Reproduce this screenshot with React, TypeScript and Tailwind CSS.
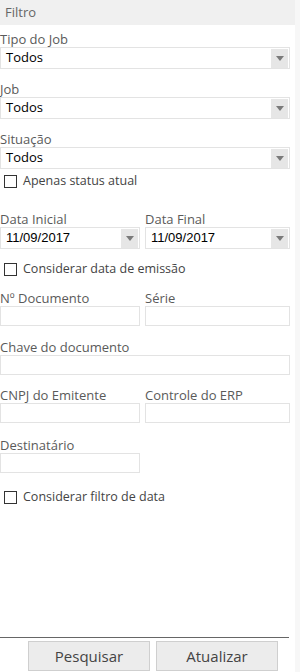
import React from "react";

const font = { fontFamily: '"Open Sans", "Noto Sans", sans-serif' };

function Arrow() {
  return (
    <div className="w-[17px] h-[19px] mr-[1px] bg-[#e6e6e6] flex items-center justify-center">
      <svg width="8" height="5" viewBox="0 0 8 5">
        <path d="M0 0 H8 L4 5 Z" fill="#7a7a7a" />
      </svg>
    </div>
  );
}

function Label({ children }: { children: React.ReactNode }) {
  return <div className="h-[16px] leading-[16px] text-[13px] text-[#5a5a5a] whitespace-nowrap">{children}</div>;
}

function Select({ value }: { value: string }) {
  return (
    <div className="h-[22px] border border-[#e3e3e3] flex items-center">
      <span className="flex-1 pl-[5px] text-[13px] text-black">{value}</span>
      <Arrow />
    </div>
  );
}

function DateInput({ value }: { value: string }) {
  return (
    <div className="h-[22px] border border-[#e3e3e3] flex items-center">
      <span
        className="flex-1 pl-[5px] text-[13px] text-black"
        style={{ fontFamily: '"Liberation Sans", Arial, sans-serif' }}
      >
        {value}
      </span>
      <Arrow />
    </div>
  );
}

function TextInput() {
  return <div className="h-[20px] border border-[#e3e3e3] bg-white" />;
}

function Check({ label }: { label: string }) {
  return (
    <div className="h-[20px] flex items-center pl-[4px]">
      <div className="w-[13px] h-[13px] border border-[#333] bg-white" />
      <span className="ml-[6px] text-[12.5px] text-[#444] whitespace-nowrap">{label}</span>
    </div>
  );
}

export default function App() {
  return (
    <div className="w-[300px] h-[672px] flex bg-white overflow-hidden" style={font}>
      <div className="w-[295px] h-full flex flex-col">
        <div className="h-[25px] bg-[#f0f0f0] pl-[5px] flex items-center text-[13px] text-[#666]">Filtro</div>

        <div className="pr-[5px]">
          <div className="mt-[6px]">
            <Label>Tipo do Job</Label>
            <Select value="Todos" />
          </div>
          <div className="mt-[12px]">
            <Label>Job</Label>
            <Select value="Todos" />
          </div>
          <div className="mt-[12px]">
            <Label>Situação</Label>
            <Select value="Todos" />
          </div>
          <div className="mt-[2px]">
            <Check label="Apenas status atual" />
          </div>
          <div className="mt-[20px] grid grid-cols-[140px_145px] gap-x-[5px]">
            <div>
              <Label>Data Inicial</Label>
              <DateInput value="11/09/2017" />
            </div>
            <div>
              <Label>Data Final</Label>
              <DateInput value="11/09/2017" />
            </div>
          </div>
          <div className="mt-[10px]">
            <Check label="Considerar data de emissão" />
          </div>
          <div className="mt-[11px] grid grid-cols-[140px_145px] gap-x-[5px]">
            <div>
              <Label>Nº Documento</Label>
              <TextInput />
            </div>
            <div>
              <Label>Série</Label>
              <TextInput />
            </div>
          </div>
          <div className="mt-[13px]">
            <Label>Chave do documento</Label>
            <TextInput />
          </div>
          <div className="mt-[12px] grid grid-cols-[140px_145px] gap-x-[5px]">
            <div>
              <Label>CNPJ do Emitente</Label>
              <TextInput />
            </div>
            <div>
              <Label>Controle do ERP</Label>
              <TextInput />
            </div>
          </div>
          <div className="mt-[14px] w-[140px]">
            <Label>Destinatário</Label>
            <TextInput />
          </div>
          <div className="mt-[14px]">
            <Check label="Considerar filtro de data" />
          </div>
        </div>

        <div className="mt-auto w-[289px] border-t border-[#666]">
          <div className="flex gap-[6px] pl-[28px] pt-[3px] pb-[1px]">
            <button className="w-[122px] h-[30px] bg-[#ececec] border border-[#cfcfcf] text-[15px] text-[#444]">
              Pesquisar
            </button>
            <button className="w-[122px] h-[30px] bg-[#ececec] border border-[#cfcfcf] text-[15px] text-[#444]">
              Atualizar
            </button>
          </div>
        </div>
      </div>
      <div className="w-[5px] h-full bg-[#f7f7f7]" />
    </div>
  );
}
